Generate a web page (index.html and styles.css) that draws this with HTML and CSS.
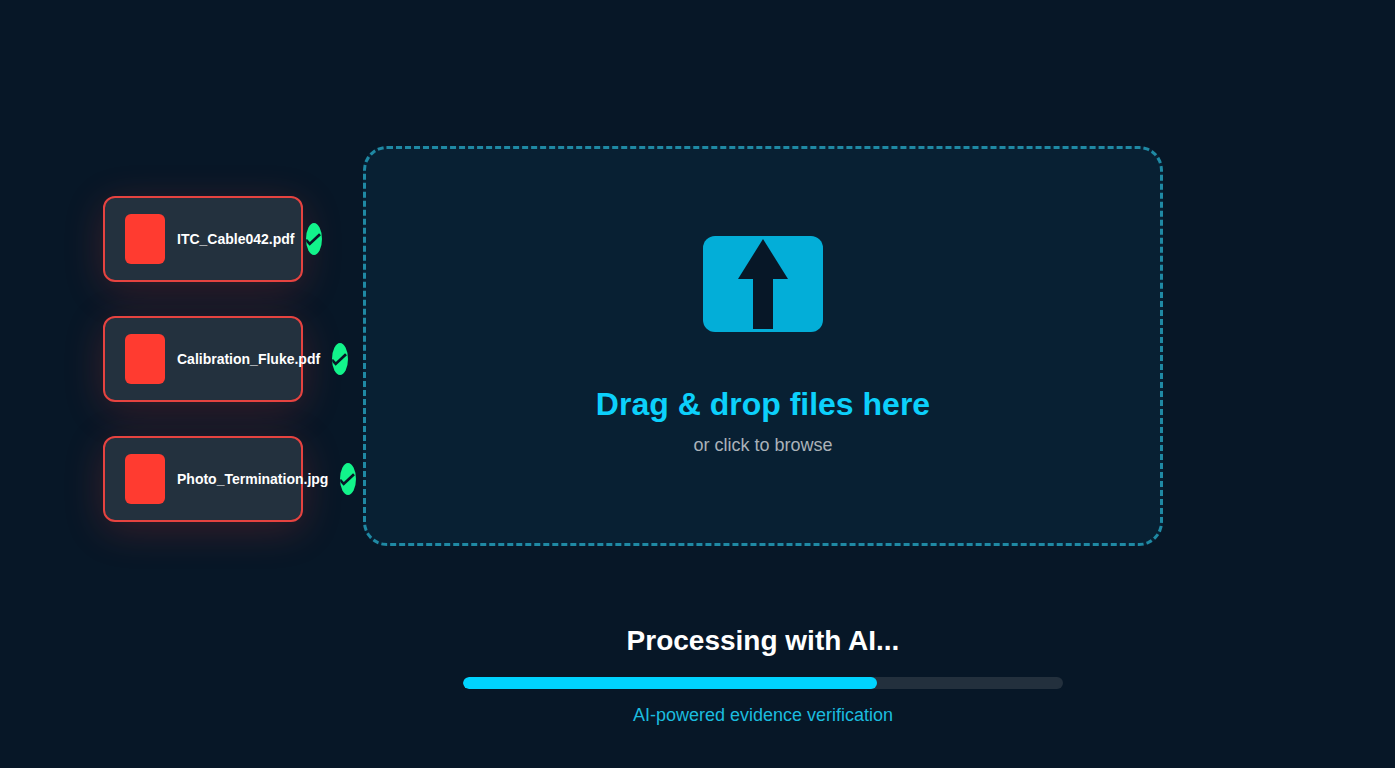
FILE: index.html
```
<!DOCTYPE html>
<html lang="en">
<head>
<meta charset="utf-8">
<title>Upload evidence</title>
<link rel="stylesheet" href="styles.css">
</head>
<body>
<main class="upload">
  <ul class="files">
    <li class="file">
      <span class="file-icon"></span>
      <span class="file-name">ITC_Cable042.pdf</span>
      <svg class="file-check" viewBox="0 0 16 32"><path d="M0 16.8L3.7 20.9L14 11.2"/></svg>
    </li>
    <li class="file">
      <span class="file-icon"></span>
      <span class="file-name">Calibration_Fluke.pdf</span>
      <svg class="file-check" viewBox="0 0 16 32"><path d="M0 16.8L3.7 20.9L14 11.2"/></svg>
    </li>
    <li class="file">
      <span class="file-icon"></span>
      <span class="file-name">Photo_Termination.jpg</span>
      <svg class="file-check" viewBox="0 0 16 32"><path d="M0 16.8L3.7 20.9L14 11.2"/></svg>
    </li>
  </ul>
  <div class="center">
    <section class="dropzone">
      <svg class="drop-icon" viewBox="0 0 120 96"><path d="M60 3L85 43H70V93H50V43H35Z"/></svg>
      <h1 class="drop-title">Drag &amp; drop files here</h1>
      <p class="drop-hint">or click to browse</p>
    </section>
    <section class="progress">
      <h2 class="progress-title">Processing with AI...</h2>
      <div class="track"><div class="bar" style="width: 69%"></div></div>
      <p class="progress-note">AI-powered evidence verification</p>
    </section>
  </div>
</main>
</body>
</html>
```
FILE: styles.css
```
* { box-sizing: border-box; }

body {
  margin: 0;
  height: 768px;
  overflow: hidden;
  background: #071727;
  font-family: "Liberation Sans", Arial, sans-serif;
}

h1, h2, p, ul { margin: 0; padding: 0; }

.upload {
  display: flex;
  align-items: flex-start;
  gap: 60px;
  padding: 146px 0 0 103px;
}

.files {
  display: flex;
  flex-direction: column;
  gap: 34px;
  width: 200px;
  padding-top: 50px;
  list-style: none;
}

.file {
  display: flex;
  align-items: center;
  gap: 12px;
  height: 86px;
  padding: 0 20px;
  border: 2px solid #e64340;
  border-radius: 12px;
  background: #23313e;
  box-shadow: 0 8px 40px rgba(255, 59, 48, 0.2);
}

.file-icon {
  flex: none;
  width: 40px;
  height: 50px;
  border-radius: 6px;
  background: #ff3b30;
}

.file-name {
  flex: none;
  color: #fff;
  font-size: 14px;
  font-weight: 700;
  line-height: 16px;
  white-space: nowrap;
}

.file-check {
  flex: none;
  width: 16px;
  height: 32px;
  border-radius: 50%;
  background: #12f48b;
}

.file-check path {
  fill: none;
  stroke: #071727;
  stroke-width: 2.7;
}

.center {
  display: flex;
  flex-direction: column;
  align-items: center;
  gap: 77px;
  width: 800px;
}

.dropzone {
  display: flex;
  flex-direction: column;
  align-items: center;
  width: 800px;
  height: 400px;
  padding-top: 87px;
  border: 3px dashed #1f89a4;
  border-radius: 24px;
  background: #082033;
}

.drop-icon {
  width: 120px;
  height: 96px;
  border-radius: 12px;
  background: #03aed8;
}

.drop-icon path { fill: #071727; }

.drop-title {
  margin-top: 54px;
  color: #0cd0fb;
  font-size: 32px;
  line-height: 36px;
}

.drop-hint {
  margin-top: 13px;
  color: #abb2b9;
  font-size: 18px;
  line-height: 21px;
}

.progress {
  display: flex;
  flex-direction: column;
  align-items: center;
  width: 600px;
}

.progress-title {
  color: #fff;
  font-size: 28px;
  line-height: 35px;
}

.track {
  width: 600px;
  height: 12px;
  margin-top: 19px;
  overflow: hidden;
  border-radius: 6px;
  background: #23303d;
}

.bar {
  height: 100%;
  border-radius: 6px;
  background: #00d4ff;
}

.progress-note {
  margin-top: 16px;
  color: #1bbcdf;
  font-size: 18px;
  line-height: 21px;
}
```
